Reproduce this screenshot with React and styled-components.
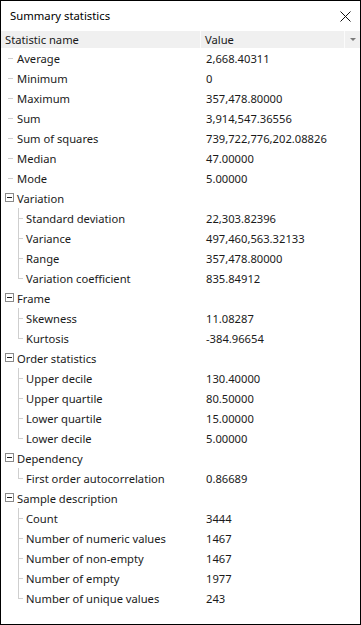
import React from "react";
import styled, { createGlobalStyle } from "styled-components";

const GlobalStyle = createGlobalStyle`
  html, body {
    margin: 0;
    padding: 0;
    background: #ffffff;
  }
  body {
    font-family: "Segoe UI", "Noto Sans", "Open Sans", sans-serif;
  }
`;

const Window = styled.div`
  width: 361px;
  height: 625px;
  box-sizing: border-box;
  border: 1px solid #000;
  background: #fff;
  display: flex;
  flex-direction: column;
  color: #1a1a1a;
  font-size: 11.2px;
`;

const TitleBar = styled.div`
  height: 30px;
  display: flex;
  align-items: center;
  justify-content: space-between;
  padding: 0 9px 0 9px;
`;

const Title = styled.div`
  font-size: 11.3px;
  color: #000;
  padding-bottom: 2px;
`;

const CloseButton = styled.button`
  border: none;
  background: none;
  padding: 0;
  width: 12px;
  height: 12px;
  display: flex;
  align-items: center;
  justify-content: center;
  cursor: pointer;
`;

const Header = styled.div`
  height: 17px;
  display: flex;
  align-items: center;
  background: #f0f0f0;
`;

const HeadCell = styled.div`
  width: ${(p) => p.$w || "auto"};
  flex: ${(p) => (p.$w ? "none" : 1)};
  height: 100%;
  display: flex;
  align-items: center;
  box-sizing: border-box;
  padding-left: ${(p) => p.$pad || 4}px;
  padding-bottom: 1px;
  border-right: ${(p) => (p.$sep ? "1px solid #fbfbfb" : "none")};
`;

const SortArrow = styled.div`
  width: 15px;
  height: 100%;
  display: flex;
  align-items: center;
  justify-content: center;
`;

const Tree = styled.div`
  display: flex;
  flex-direction: column;
`;

const Row = styled.div`
  height: 20px;
  display: flex;
  align-items: center;
`;

const NameCell = styled.div`
  width: 200px;
  height: 100%;
  display: flex;
  align-items: center;
  white-space: nowrap;
`;

const ValueCell = styled.div`
  padding-left: 5px;
  white-space: nowrap;
`;

const Guide = styled.svg`
  flex: none;
  display: block;
`;

const LINE = "#cfcfcf";

const LeafGuide = () => (
  <Guide width="16" height="20">
    <line x1="7" y1="10.5" x2="12" y2="10.5" stroke={LINE} />
  </Guide>
);

const GroupGuide = () => (
  <Guide width="16" height="20">
    <rect x="4.5" y="5.5" width="8" height="8" fill="#fff" stroke="#8a8a8a" />
    <line x1="6" y1="9.5" x2="11" y2="9.5" stroke="#202020" />
  </Guide>
);

const ChildGuide = ({ last }) => (
  <Guide width="25" height="20">
    <line x1="17.5" y1="0" x2="17.5" y2={last ? 11 : 20} stroke={LINE} />
    <line x1="17" y1="10.5" x2="22" y2="10.5" stroke={LINE} />
  </Guide>
);

const data = [
  { name: "Average", value: "2,668.40311" },
  { name: "Minimum", value: "0" },
  { name: "Maximum", value: "357,478.80000" },
  { name: "Sum", value: "3,914,547.36556" },
  { name: "Sum of squares", value: "739,722,776,202.08826" },
  { name: "Median", value: "47.00000" },
  { name: "Mode", value: "5.00000" },
  {
    name: "Variation",
    children: [
      ["Standard deviation", "22,303.82396"],
      ["Variance", "497,460,563.32133"],
      ["Range", "357,478.80000"],
      ["Variation coefficient", "835.84912"],
    ],
  },
  {
    name: "Frame",
    children: [
      ["Skewness", "11.08287"],
      ["Kurtosis", "-384.96654"],
    ],
  },
  {
    name: "Order statistics",
    children: [
      ["Upper decile", "130.40000"],
      ["Upper quartile", "80.50000"],
      ["Lower quartile", "15.00000"],
      ["Lower decile", "5.00000"],
    ],
  },
  {
    name: "Dependency",
    children: [["First order autocorrelation", "0.86689"]],
  },
  {
    name: "Sample description",
    children: [
      ["Count", "3444"],
      ["Number of numeric values", "1467"],
      ["Number of non-empty", "1467"],
      ["Number of empty", "1977"],
      ["Number of unique values", "243"],
    ],
  },
];

const App = () => {
  return (
    <>
      <GlobalStyle />
      <Window>
        <TitleBar>
          <Title>Summary statistics</Title>
          <CloseButton aria-label="Close">
            <svg width="11" height="11" viewBox="0 0 11 11">
              <path d="M0.5 0.5 L10.5 10.5 M10.5 0.5 L0.5 10.5" stroke="#111" strokeWidth="1" />
            </svg>
          </CloseButton>
        </TitleBar>
        <Header>
          <HeadCell $w="200px" $sep>Statistic name</HeadCell>
          <HeadCell $pad={4} $sep>Value</HeadCell>
          <SortArrow>
            <svg width="6" height="4" viewBox="0 0 6 4">
              <path d="M0 0 H6 L3 3 Z" fill="#7a7a7a" />
            </svg>
          </SortArrow>
        </Header>
        <Tree>
          {data.map((item) =>
            item.children ? (
              <React.Fragment key={item.name}>
                <Row>
                  <NameCell>
                    <GroupGuide />
                    {item.name}
                  </NameCell>
                </Row>
                {item.children.map(([n, v], i) => (
                  <Row key={n}>
                    <NameCell>
                      <ChildGuide last={i === item.children.length - 1} />
                      {n}
                    </NameCell>
                    <ValueCell>{v}</ValueCell>
                  </Row>
                ))}
              </React.Fragment>
            ) : (
              <Row key={item.name}>
                <NameCell>
                  <LeafGuide />
                  {item.name}
                </NameCell>
                <ValueCell>{item.value}</ValueCell>
              </Row>
            )
          )}
        </Tree>
      </Window>
    </>
  );
};

export default App;
